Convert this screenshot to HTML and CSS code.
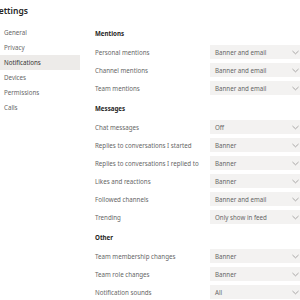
FILE: index.html
```html
<!DOCTYPE html>
<html lang="en">
<head>
    <meta charset="UTF-8">
    <meta name="viewport" content="width=device-width, initial-scale=1.0">
    <title>Settings</title>
    <link rel="stylesheet" href="styles.css">
</head>
<body>
    <div class="settings-header">
        <h1>Settings</h1>
    </div>

    <div class="settings-body">
        <ul class="nav">
            <li>General</li>
            <li>Privacy</li>
            <li class="active">Notifications</li>
            <li>Devices</li>
            <li>Permissions</li>
            <li>Calls</li>
        </ul>

        <div class="content">
            <div class="section">
                <h2>Mentions</h2>
                <div class="row">
                    <span class="label">Personal mentions</span>
                    <div class="dropdown"><span>Banner and email</span><svg viewBox="0 0 8 5"><path d="M0.5 0.8 L4 4 L7.5 0.8"/></svg></div>
                </div>
                <div class="row">
                    <span class="label">Channel mentions</span>
                    <div class="dropdown"><span>Banner and email</span><svg viewBox="0 0 8 5"><path d="M0.5 0.8 L4 4 L7.5 0.8"/></svg></div>
                </div>
                <div class="row">
                    <span class="label">Team mentions</span>
                    <div class="dropdown"><span>Banner and email</span><svg viewBox="0 0 8 5"><path d="M0.5 0.8 L4 4 L7.5 0.8"/></svg></div>
                </div>
            </div>

            <div class="section">
                <h2>Messages</h2>
                <div class="row">
                    <span class="label">Chat messages</span>
                    <div class="dropdown"><span>Off</span><svg viewBox="0 0 8 5"><path d="M0.5 0.8 L4 4 L7.5 0.8"/></svg></div>
                </div>
                <div class="row">
                    <span class="label">Replies to conversations I started</span>
                    <div class="dropdown"><span>Banner</span><svg viewBox="0 0 8 5"><path d="M0.5 0.8 L4 4 L7.5 0.8"/></svg></div>
                </div>
                <div class="row">
                    <span class="label">Replies to conversations I replied to</span>
                    <div class="dropdown"><span>Banner</span><svg viewBox="0 0 8 5"><path d="M0.5 0.8 L4 4 L7.5 0.8"/></svg></div>
                </div>
                <div class="row">
                    <span class="label">Likes and reactions</span>
                    <div class="dropdown"><span>Banner</span><svg viewBox="0 0 8 5"><path d="M0.5 0.8 L4 4 L7.5 0.8"/></svg></div>
                </div>
                <div class="row">
                    <span class="label">Followed channels</span>
                    <div class="dropdown"><span>Banner and email</span><svg viewBox="0 0 8 5"><path d="M0.5 0.8 L4 4 L7.5 0.8"/></svg></div>
                </div>
                <div class="row">
                    <span class="label">Trending</span>
                    <div class="dropdown"><span>Only show in feed</span><svg viewBox="0 0 8 5"><path d="M0.5 0.8 L4 4 L7.5 0.8"/></svg></div>
                </div>
            </div>

            <div class="section">
                <h2>Other</h2>
                <div class="row">
                    <span class="label">Team membership changes</span>
                    <div class="dropdown"><span>Banner</span><svg viewBox="0 0 8 5"><path d="M0.5 0.8 L4 4 L7.5 0.8"/></svg></div>
                </div>
                <div class="row">
                    <span class="label">Team role changes</span>
                    <div class="dropdown"><span>Banner</span><svg viewBox="0 0 8 5"><path d="M0.5 0.8 L4 4 L7.5 0.8"/></svg></div>
                </div>
                <div class="row">
                    <span class="label">Notification sounds</span>
                    <div class="dropdown"><span>All</span><svg viewBox="0 0 8 5"><path d="M0.5 0.8 L4 4 L7.5 0.8"/></svg></div>
                </div>
            </div>
        </div>
    </div>
</body>
</html>
```

FILE: styles.css
```css
body {
    font-family: 'Noto Sans', 'Open Sans', sans-serif;
    background-color: #ffffff;
    margin: 0;
    padding: 0;
    width: 300px;
    height: 300px;
    overflow: hidden;
    color: #616161;
}

.settings-header {
    height: 25px;
    display: flex;
    align-items: center;
}

h1 {
    margin: 0 0 5px -6px;
    font-size: 8.5px;
    font-weight: 600;
    color: #252423;
}

.settings-body {
    display: flex;
}

.nav {
    list-style: none;
    margin: 0;
    padding: 0;
    width: 80px;
    flex-shrink: 0;
}

.nav li {
    height: 15px;
    line-height: 15px;
    padding-left: 4px;
    font-size: 6.2px;
    color: #666666;
}

.nav li.active {
    background-color: #edebe9;
    color: #333333;
}

.content {
    padding-left: 15px;
    display: flex;
    flex-direction: column;
    gap: 3px;
}

h2 {
    margin: 0;
    height: 18px;
    line-height: 18px;
    font-size: 6.2px;
    font-weight: 700;
    color: #252423;
}

.row {
    display: flex;
    align-items: center;
    height: 18px;
}

.label {
    width: 115px;
    flex-shrink: 0;
    font-size: 6.2px;
    color: #666666;
}

.dropdown {
    width: 95px;
    height: 14px;
    background-color: #f3f2f1;
    display: flex;
    align-items: center;
    justify-content: space-between;
    padding: 0 6px 0 5px;
    box-sizing: border-box;
    font-size: 6.2px;
    color: #666666;
}

.dropdown svg {
    width: 7px;
    height: 5px;
    fill: none;
    stroke: #8a8886;
    stroke-width: 0.8;
}
```
